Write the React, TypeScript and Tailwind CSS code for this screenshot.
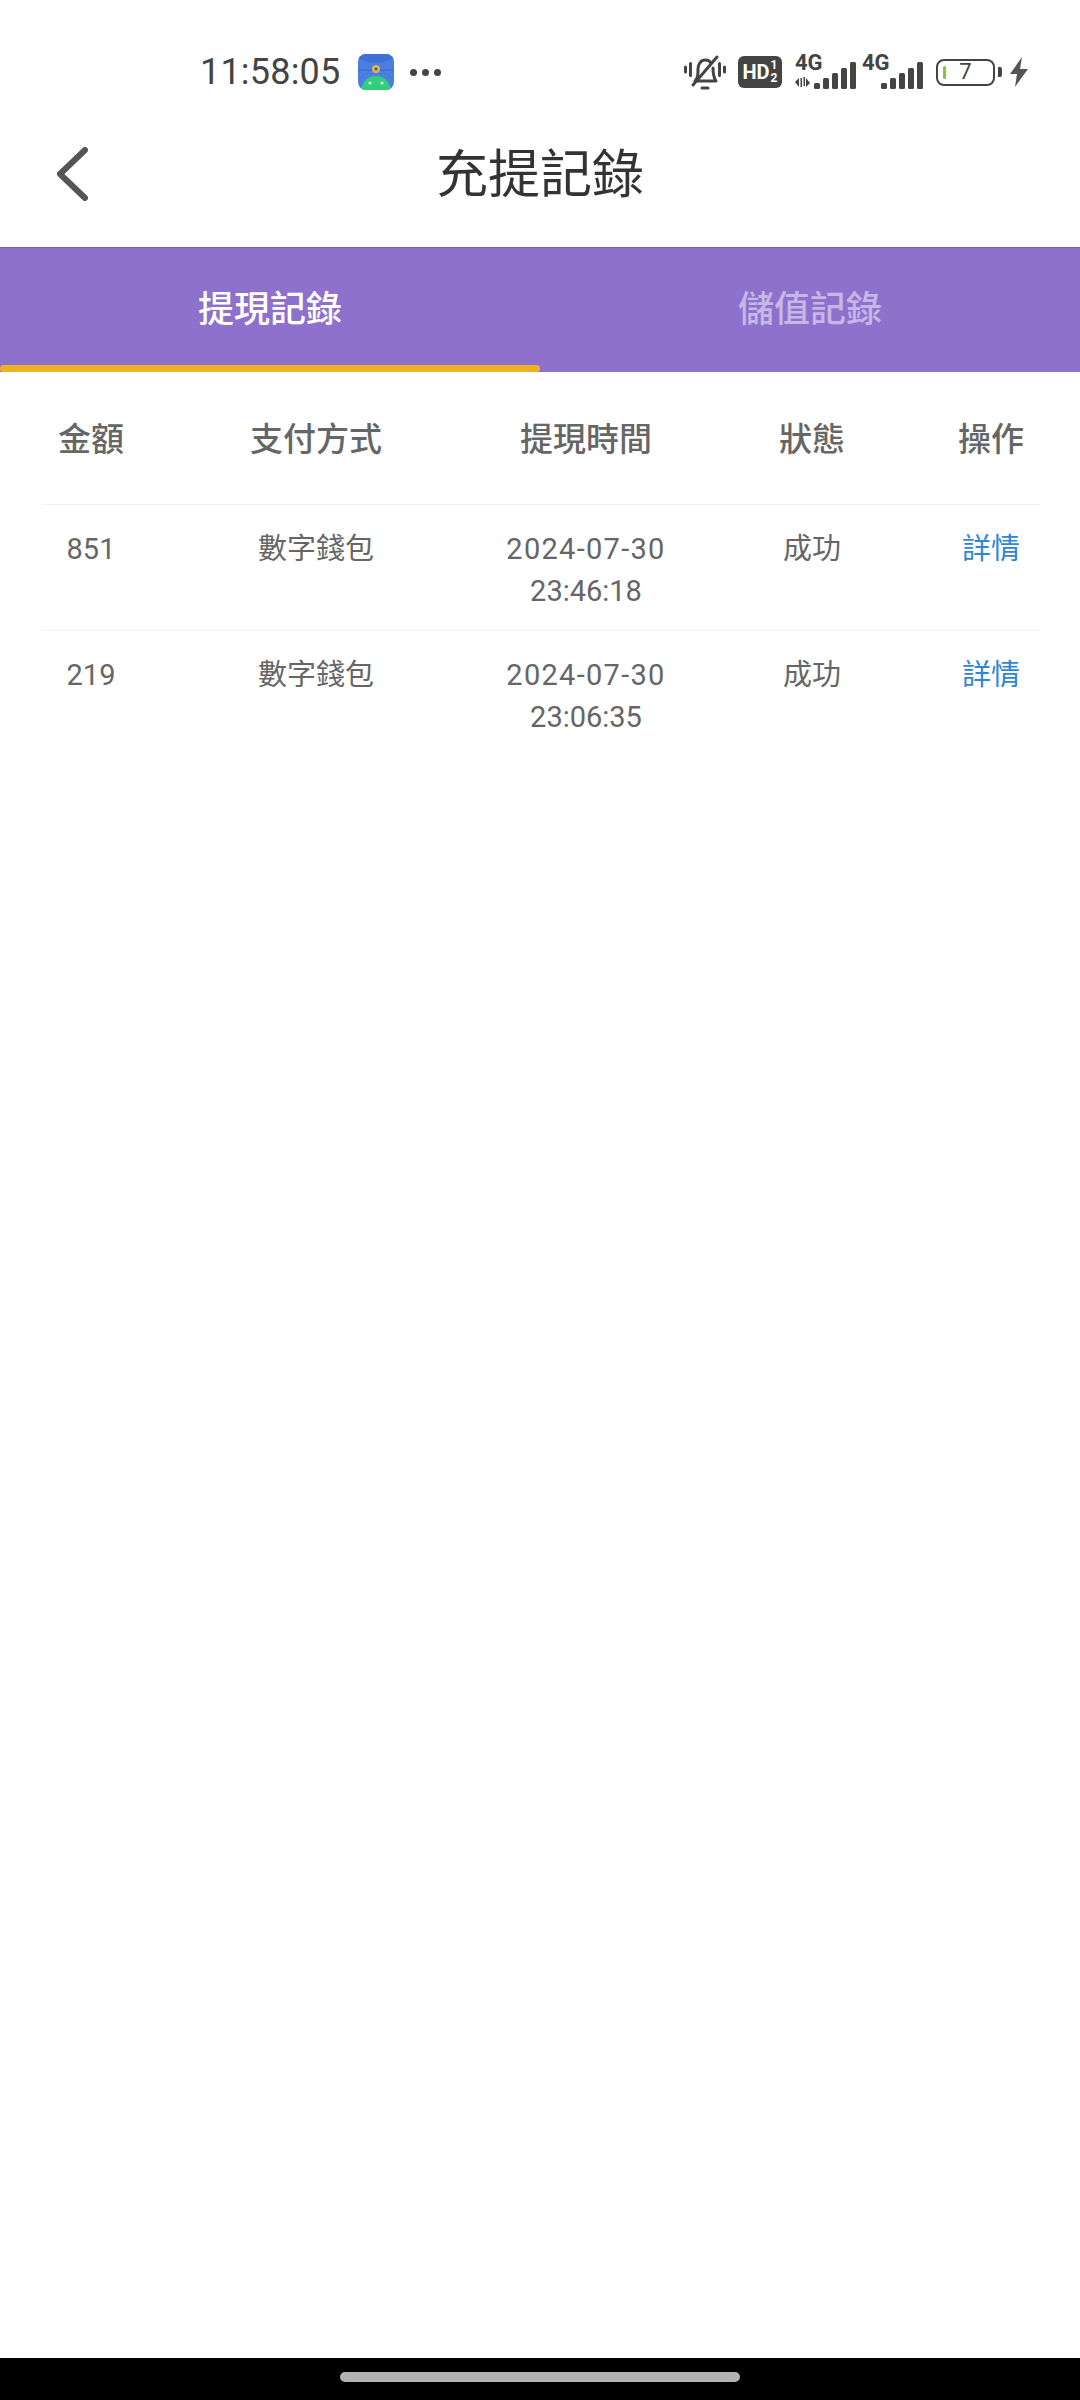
const rows = [
  { amount: '851', method: '數字錢包', date: '2024-07-30', time: '23:46:18', status: '成功' },
  { amount: '219', method: '數字錢包', date: '2024-07-30', time: '23:06:35', status: '成功' },
];

const cols = 'grid grid-cols-[96px_354px_186px_266px_92px]';
const cjk = "font-['Roboto','Noto_Sans_CJK_TC',sans-serif]";

function AppIcon() {
  return (
    <svg width="36" height="36" viewBox="0 0 36 36">
      <defs>
        <clipPath id="app-icon-corners">
          <rect width="36" height="36" rx="8" />
        </clipPath>
      </defs>
      <g clipPath="url(#app-icon-corners)">
        <rect width="36" height="36" fill="#4a7fe0" />
        <path d="M0 4 Q18 14 36 4 V0 H0 Z" fill="#3f70d4" />
        <path d="M0 16 H36" stroke="#3a68c4" strokeWidth="1" />
        <path d="M3 36 Q6 22 18 22 Q30 22 33 36 Z" fill="#2fd07c" />
        <circle cx="18" cy="15" r="4" fill="#e3b64c" />
        <circle cx="18" cy="15" r="1.5" fill="#3a5a9a" />
        <circle cx="12" cy="29" r="1.5" fill="#e8fff2" />
        <circle cx="24" cy="29" r="1.5" fill="#e8fff2" />
      </g>
    </svg>
  );
}

function MutedBell() {
  return (
    <svg width="42" height="36" viewBox="0 0 42 36" fill="none" stroke="#444" strokeWidth="3" strokeLinecap="round" strokeLinejoin="round">
      <path d="M1.5 13v5M6.5 9.5v12M35.5 9.5v12M40.5 13v5" />
      <path d="M11 27c3-3 3-6 3-12 0-5 3-9 7-9 3 0 5 1 6 3M29 14c0 7 1 10 3 13H11" />
      <path d="M9 31L33 3" />
      <path d="M18 34h6" />
    </svg>
  );
}

function Bars({ width }: { width: number }) {
  const heights = [6, 11, 16, 21, 27];
  return (
    <div className="flex items-end gap-[3px]" style={{ width }}>
      {heights.map((h) => (
        <div key={h} className="w-[6px] rounded-[1.5px] bg-[#444]" style={{ height: h }} />
      ))}
    </div>
  );
}

function Signal({ arrows }: { arrows?: boolean }) {
  return (
    <div className="relative h-[34px] w-[61px]">
      <span className="absolute left-0 top-[-3px] font-['Roboto',sans-serif] text-[22px] font-bold leading-[22px] text-[#444]">4G</span>
      {arrows && (
        <svg className="absolute bottom-[1px] left-0" width="15" height="11" viewBox="0 0 15 11" fill="#444">
          <path d="M0 5l4-4v9zM5.5 1h1.5v9H5.5zM8.5 0h1.5v9H8.5zM15 6l-4 4V1z" />
        </svg>
      )}
      <div className="absolute bottom-0 right-0">
        <Bars width={42} />
      </div>
    </div>
  );
}

function StatusBar() {
  return (
    <div className="flex h-[104px] items-center justify-between pl-[200px] pr-[52px] pt-[40px]">
      <div className="flex items-center">
        <span className="font-['Roboto',sans-serif] text-[36px] leading-[40px] tracking-[0.2px] text-[#444]">11:58:05</span>
        <div className="ml-[18px]">
          <AppIcon />
        </div>
        <div className="ml-[16px] flex gap-[5px]">
          <div className="h-[7px] w-[7px] rounded-full bg-[#444]" />
          <div className="h-[7px] w-[7px] rounded-full bg-[#444]" />
          <div className="h-[7px] w-[7px] rounded-full bg-[#444]" />
        </div>
      </div>
      <div className="flex items-center">
        <MutedBell />
        <div className="ml-[12px] flex h-[32px] w-[44px] items-center justify-center gap-[1px] rounded-[6px] bg-[#444] text-white">
          <span className="font-['Roboto',sans-serif] text-[20px] font-bold leading-none">HD</span>
          <span className="flex flex-col font-['Roboto',sans-serif] text-[12px] font-bold leading-[13px]">
            <span>1</span>
            <span>2</span>
          </span>
        </div>
        <div className="ml-[13px]">
          <Signal arrows />
        </div>
        <div className="ml-[6px]">
          <Signal />
        </div>
        <div className="relative ml-[13px] flex h-[27px] w-[59px] items-center justify-center rounded-[8px] border-2 border-[#444]">
          <div className="absolute left-[5px] top-[5px] h-[13px] w-[3px] rounded-full bg-[#86c540]" />
          <span className="font-['Roboto',sans-serif] text-[22px] leading-none text-[#444]">7</span>
        </div>
        <div className="ml-[3px] h-[10px] w-[4px] rounded-r-[2px] bg-[#444]" />
        <svg className="ml-[8px]" width="18" height="30" viewBox="0 0 18 30" fill="#555">
          <path d="M12 0L0 17h7L5 30 18 12h-8z" />
        </svg>
      </div>
    </div>
  );
}

export default function App() {
  return (
    <div className={`flex h-[2400px] w-[1080px] flex-col bg-white ${cjk}`}>
      <StatusBar />

      <div className="relative flex h-[143px] items-center justify-center pt-[1px]">
        <button className="absolute left-[54px] top-[43px]">
          <svg width="36" height="54" viewBox="0 0 36 54" fill="none" stroke="#555" strokeWidth="6" strokeLinecap="round" strokeLinejoin="round">
            <path d="M31 3L6 27l25 24" />
          </svg>
        </button>
        <h1 className="text-[52px] font-normal leading-[60px] text-[#333]">充提記錄</h1>
      </div>

      <div className="flex h-[125px] border-t border-[#7c5fb8] bg-[#8e70cd]">
        <div className="relative flex flex-1 items-center justify-center text-[36px] font-medium text-white">
          提現記錄
          <div className="absolute bottom-0 left-0 h-[7px] w-full rounded-[4px] bg-[#ebb31f]" />
        </div>
        <div className="flex flex-1 items-center justify-center text-[36px] font-medium text-white/50">
          儲值記錄
        </div>
      </div>

      <div className="ml-[42px] w-[998px]">
        <div className={`${cols} h-[133px] items-center border-b border-[#f2f2f2] pl-[1px] pt-[4px] text-center text-[33px] font-medium text-[#666]`}>
          <div>金額</div>
          <div>支付方式</div>
          <div>提現時間</div>
          <div>狀態</div>
          <div>操作</div>
        </div>
        {rows.map((row, i) => (
          <div
            key={row.amount}
            className={`${cols} h-[126px] pl-[1px] pt-[23px] text-center text-[29px] leading-[42px] text-[#666] ${i === 0 ? 'border-b border-[#f2f2f2]' : ''}`}
          >
            <div>{row.amount}</div>
            <div>{row.method}</div>
            <div>
              <span className="tracking-[1.3px]">{row.date}</span>
              <br />
              {row.time}
            </div>
            <div>{row.status}</div>
            <div className="text-[#2f86d9]">詳情</div>
          </div>
        ))}
      </div>

      <div className="mt-auto flex h-[42px] items-start justify-center bg-black pt-[14px]">
        <div className="h-[10px] w-[400px] rounded-full bg-[#b2b2b2]" />
      </div>
    </div>
  );
}
